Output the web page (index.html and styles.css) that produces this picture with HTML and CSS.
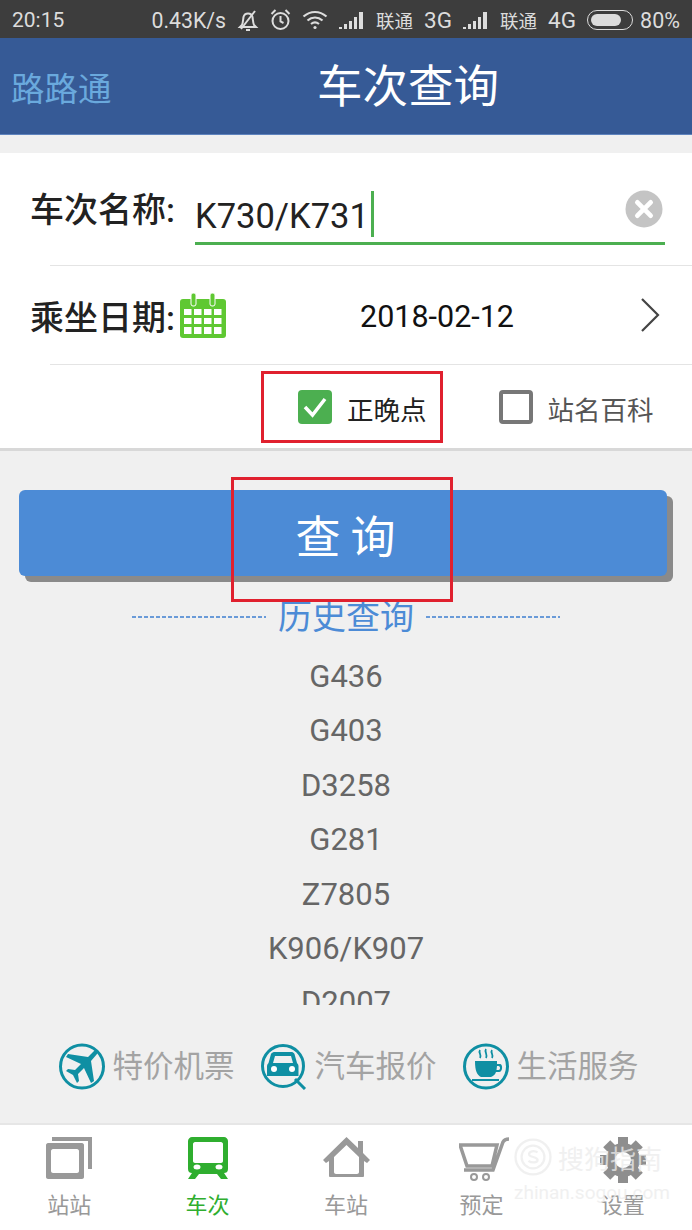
FILE: index.html
```html
<!DOCTYPE html>
<html lang="zh-CN">
<head>
  <meta charset="UTF-8">
  <title>车次查询</title>
  <link rel="stylesheet" href="styles.css">
</head>
<body>
  <div class="phone">
    <div class="status">
      <span class="time">20:15</span>
      <div class="status-right">
        <span class="speed">0.43K/s</span>
        <svg width="22" height="24" viewBox="0 0 22 24" fill="none" stroke="#ddd" stroke-width="2">
          <path d="M5 17c1-2 1-5 1.500-8 .5-2 2.500-3.500 4.500-3.500s4 1.500 4.500 3.500c.5 3 .5 6 1.500 8l2 2H3z"/>
          <path d="M9 22h4M18 3 4 21"/>
        </svg>
        <svg width="21" height="24" viewBox="0 0 21 24" fill="none" stroke="#ddd" stroke-width="2">
          <circle cx="10.500" cy="13" r="8"/>
          <path d="M10.500 8v5.500l3 1.500M1.500 6l4-4M19.500 6l-4-4"/>
        </svg>
        <svg width="26" height="20" viewBox="0 0 26 20" fill="none" stroke="#ddd" stroke-width="2.200">
          <path d="M1.500 6.500c7-6 16-6 23 0M5.500 10.500c4.500-4 10.500-4 15 0M9 14c2.500-2 5.500-2 8 0"/>
          <circle cx="13" cy="17.500" r="1.600" fill="#ddd" stroke="none"/>
        </svg>
        <svg class="signal" width="26" height="18" viewBox="0 0 26 18" fill="#ddd"><path d="M0 16h3v2H0zM5 13h3v5H5zM10 10h3v8h-3zM15 6h3v12h-3zM20 1h4v17h-4z"/></svg>
        <span class="carrier">联通</span>
        <span class="net">3G</span>
        <svg class="signal" width="26" height="18" viewBox="0 0 26 18" fill="#ddd"><path d="M0 16h3v2H0zM5 13h3v5H5zM10 10h3v8h-3zM15 6h3v12h-3zM20 1h4v17h-4z"/></svg>
        <span class="carrier">联通</span>
        <span class="net">4G</span>
        <div class="battery"><div class="battery-level"></div></div>
        <span class="percent">80%</span>
      </div>
    </div>

    <header class="topbar">
      <a class="back">路路通</a>
      <h1 class="title">车次查询</h1>
    </header>

    <section class="form">
      <div class="row row-train">
        <label class="label">车次名称:</label>
        <div class="input">
          <span class="input-text">K730/K731</span><span class="caret"></span>
          <svg class="clear" width="38" height="38" viewBox="0 0 40 40">
            <circle cx="20" cy="20" r="19.500" fill="#c4c4c4"/>
            <path d="M13 13l14 14M27 13 13 27" stroke="#fff" stroke-width="5" stroke-linecap="round"/>
          </svg>
        </div>
      </div>
      <div class="row row-date">
        <label class="label">乘坐日期:</label>
        <svg class="calendar" width="46" height="45" viewBox="0 0 46 45">
          <rect x="0" y="6" width="46" height="39" rx="3" fill="#5fc832"/>
          <rect x="11" y="0" width="5" height="13" rx="2" fill="#5fc832" stroke="#fff"/>
          <rect x="30" y="0" width="5" height="13" rx="2" fill="#5fc832" stroke="#fff"/>
          <g fill="#fff">
            <rect x="4" y="16" width="7.500" height="6"/><rect x="14" y="16" width="7.500" height="6"/><rect x="24" y="16" width="7.500" height="6"/><rect x="34" y="16" width="7.500" height="6"/>
            <rect x="4" y="25" width="7.500" height="6"/><rect x="14" y="25" width="7.500" height="6"/><rect x="24" y="25" width="7.500" height="6"/><rect x="34" y="25" width="7.500" height="6"/>
            <rect x="4" y="34" width="7.500" height="7"/><rect x="14" y="34" width="7.500" height="7"/><rect x="24" y="34" width="7.500" height="7"/><rect x="34" y="34" width="7.500" height="7"/>
          </g>
        </svg>
        <span class="date">2018-02-12</span>
        <svg class="chevron" width="20" height="34" viewBox="0 0 20 34" fill="none" stroke="#444" stroke-width="2.200"><path d="M2 1l16 16L2 33"/></svg>
      </div>
      <div class="options">
        <div class="option option-late">
          <span class="check check-on">
            <svg width="34" height="34" viewBox="0 0 34 34" fill="none" stroke="#fff" stroke-width="3.500"><path d="M7 17l7.500 8L27 9"/></svg>
          </span>
          <span class="option-text">正晚点</span>
        </div>
        <div class="option option-wiki">
          <span class="check"></span>
          <span class="option-text muted">站名百科</span>
        </div>
      </div>
    </section>

    <main class="content">
      <button class="query">查 询</button>
      <div class="history-head">
        <span class="dash"></span>
        <span class="history-title">历史查询</span>
        <span class="dash"></span>
      </div>
      <ul class="history">
        <li>G436</li>
        <li>G403</li>
        <li>D3258</li>
        <li>G281</li>
        <li>Z7805</li>
        <li>K906/K907</li>
        <li>D2007</li>
      </ul>
      <div class="links">
        <a class="link">
          <svg width="46" height="47" viewBox="0 0 46 47">
            <circle cx="23" cy="23.500" r="21.500" fill="none" stroke="#0f8fa3" stroke-width="3"/>
            <path fill="#0f8fa3" d="M35 8c2-1 4 1 3 3l-6 7 3 20-3 2-7-15-6 6 1 7-2 2-4-8-7-4 2-2 7 1 6-6-15-7 2-3 20 3z"/>
          </svg>
          <span>特价机票</span>
        </a>
        <a class="link">
          <svg width="46" height="47" viewBox="0 0 46 47">
            <circle cx="22" cy="23" r="20.500" fill="none" stroke="#0f8fa3" stroke-width="3"/>
            <path fill="#0f8fa3" d="M13 9h18c1 0 2 1 2.500 2l2.500 9c1 1 1.500 2 1.500 3v10H6v-10c0-1 .5-2 1.500-3L10 11c.5-1 2-2 3-2zm1 4-2 7h20l-2-7z"/>
            <circle cx="13" cy="26" r="3" fill="#fff"/><circle cx="31" cy="26" r="3" fill="#fff"/>
            <path d="M34 36l10 10" stroke="#0f8fa3" stroke-width="3"/>
          </svg>
          <span>汽车报价</span>
        </a>
        <a class="link">
          <svg width="46" height="47" viewBox="0 0 46 47">
            <circle cx="23" cy="23.500" r="21.500" fill="none" stroke="#0f8fa3" stroke-width="3"/>
            <path fill="none" stroke="#0f8fa3" stroke-width="1.800" d="M17 7c-2 3 2 4 0 8M23 6c-2 3 2 5 0 9M29 7c-2 3 2 4 0 8"/>
            <path fill="#0f8fa3" d="M12 18h22v3h3c3 0 3 8-1 8h-3c-1 3-3 4-5 5H18c-4-2-6-6-6-16zm22 5-.5 4h2c2 0 2-4 0-4zM9 36h27v2H9z"/>
          </svg>
          <span>生活服务</span>
        </a>
      </div>
    </main>

    <nav class="tabs">
      <a class="tab">
        <svg width="46" height="42" viewBox="0 0 46 42">
          <path fill="none" stroke="#999" stroke-width="4" d="M8 4V2h36v30"/>
          <path fill="#999" d="M2 6h34c1 0 2 1 2 2v32c0 1-1 2-2 2H2c-1 0-2-1-2-2V8c0-1 1-2 2-2zm5 6c-1 0-2 1-2 2v20c0 1 1 2 2 2h24c1 0 2-1 2-2V14c0-1-1-2-2-2z"/>
        </svg>
        <span>站站</span>
      </a>
      <a class="tab tab-active">
        <svg width="40" height="42" viewBox="0 0 40 42">
          <path fill="#2fae2f" d="M4 0h32c2 0 4 2 4 4v28c0 3-2 4-4 4l4 6h-7l-4-5H11l-4 5H0l4-6c-2 0-4-1-4-4V4c0-2 2-4 4-4zm3 5c-1 0-2 1-2 2v17c0 1 1 2 2 2h26c1 0 2-1 2-2V7c0-1-1-2-2-2z"/>
          <ellipse cx="9" cy="30" rx="3.500" ry="2.500" fill="#fff"/>
          <ellipse cx="31" cy="30" rx="3.500" ry="2.500" fill="#fff"/>
        </svg>
        <span>车次</span>
      </a>
      <a class="tab">
        <svg width="47" height="42" viewBox="0 0 47 42">
          <path fill="#999" d="M23.500 0 35 11V4h5v12l7 7-3 3-3-2v15c0 1-1 1-2 1H8c-1 0-2 0-2-1V24l-3 2-3-3zm0 8L11 20v15c0 1 1 2 2 2h21c1 0 2-1 2-2V20z"/>
        </svg>
        <span>车站</span>
      </a>
      <a class="tab tab-order">
        <svg width="54" height="44" viewBox="0 0 54 44" fill="none" stroke="#999">
          <path stroke-width="3.500" d="M1 8h37l-5 21H8zM5 33h29l10-28c1-2 3-3 6-3"/>
          <circle cx="15" cy="40" r="3" stroke-width="2"/>
          <circle cx="27" cy="40" r="3" stroke-width="2"/>
        </svg>
        <span>预定</span>
      </a>
      <a class="tab">
        <svg width="46" height="46" viewBox="0 0 46 46">
          <g fill="#8e8e8e">
            <circle cx="23" cy="23" r="17"/>
            <rect x="18" y="0" width="10" height="46"/>
            <rect x="18" y="0" width="10" height="46" transform="rotate(45 23 23)"/>
            <rect x="18" y="0" width="10" height="46" transform="rotate(90 23 23)"/>
            <rect x="18" y="0" width="10" height="46" transform="rotate(135 23 23)"/>
          </g>
          <circle cx="23" cy="23" r="8" fill="#fff"/>
        </svg>
        <span>设置</span>
      </a>
    </nav>

    <!-- annotation boxes and watermark lie over the screenshot -->
    <div class="mark mark-late"></div>
    <div class="mark mark-query"></div>
    <div class="watermark">
      <div class="wm-top">
        <svg width="38" height="40" viewBox="0 0 50 50" fill="none" stroke="#ececec" stroke-width="3">
          <circle cx="25" cy="25" r="23"/><circle cx="25" cy="25" r="15"/>
          <path d="M31 19c-4-3-12-2-11 3 1 4 11 2 11 7 0 4-8 4-12 1"/>
        </svg>
        <span>搜狗指南</span>
      </div>
      <div class="wm-url">zhinan.sogou.com</div>
    </div>
  </div>
</body>
</html>
```

FILE: styles.css
```css
* {
  box-sizing: border-box;
}

body {
  margin: 0;
  background-color: #f0f0f0;
  font-family: Roboto, "Noto Sans CJK SC", sans-serif;
}

.phone {
  position: relative;
  width: 692px;
  height: 1230px;
  overflow: hidden;
  display: flex;
  flex-direction: column;
  background-color: #f0f0f0;
}

/* status bar */
.status {
  height: 38px;
  flex: none;
  display: flex;
  align-items: center;
  justify-content: space-between;
  padding: 2px 12px 0;
  background-color: #3d3d3d;
  color: #dcdcdc;
  font-size: 21px;
}

.status-right {
  display: flex;
  align-items: center;
}

.status-right svg {
  flex: none;
  margin-left: 11px;
}

.speed {
  font-size: 21.300px;
}

.carrier {
  font-size: 18.500px;
  margin-left: 11px;
}

.net {
  font-size: 22.500px;
  margin-left: 11px;
}

.battery {
  width: 46px;
  height: 20px;
  margin-left: 11px;
  padding: 3px;
  border: 1.500px solid #dcdcdc;
  border-radius: 10px;
}

.battery-level {
  width: 80%;
  height: 100%;
  border-radius: 7px;
  background-color: #dcdcdc;
}

.percent {
  font-size: 21.500px;
  margin-left: 7px;
}

/* top bar */
.topbar {
  height: 97px;
  flex: none;
  display: flex;
  align-items: center;
  padding-left: 11px;
  background-color: #365a96;
  border-bottom: 1px solid #5e83bd;
}

.back {
  width: 306px;
  color: #6aa9dd;
  font-size: 33.500px;
}

.title {
  margin: 0;
  padding-top: 4px;
  color: #fff;
  font-size: 45.500px;
  font-weight: 400;
  line-height: 1;
}

/* form */
.form {
  height: 298px;
  flex: none;
  margin-top: 18px;
  background-color: #fff;
  border-bottom: 3px solid #d8d8d8;
}

.row {
  display: flex;
  align-items: center;
  margin-left: 50px;
  border-bottom: 1px solid #e4e4e4;
}

.row-train {
  height: 113px;
}

.row-date {
  height: 99px;
}

.label {
  width: 148px;
  flex: none;
  margin-left: -20px;
  color: #222;
  font-size: 34px;
  font-weight: 500;
  white-space: nowrap;
}

.row-train .label {
  margin-bottom: 4px;
}

.input {
  width: 470px;
  height: 50px;
  margin-left: 17px;
  margin-top: 22px;
  display: flex;
  align-items: center;
  border-bottom: 3px solid #4caf50;
}

.input-text {
  color: #222;
  font-size: 34.500px;
  padding-bottom: 6px;
}

.caret {
  width: 3px;
  height: 46px;
  margin-left: 2px;
  margin-bottom: 10px;
  background-color: #4caf50;
}

.clear {
  margin-left: auto;
  margin-bottom: 20px;
  margin-right: 2px;
}

.calendar {
  flex: none;
  margin-left: 2px;
}

.date {
  margin-left: 134px;
  padding-top: 2px;
  color: #111;
  font-size: 30.500px;
}

.chevron {
  margin-left: auto;
  margin-right: 32px;
}

.options {
  height: 83px;
  display: flex;
  align-items: center;
  padding-left: 298px;
  color: #222;
  font-size: 26.500px;
}

.option {
  display: flex;
  align-items: center;
  gap: 15px;
}

.option-text {
  padding-top: 3px;
}

.option-wiki {
  margin-left: 72px;
}

.muted {
  color: #555;
}

.check {
  width: 34px;
  height: 34px;
  flex: none;
  display: block;
  border: 4px solid #777;
  border-radius: 4px;
}

.check-on {
  border: 0;
  background-color: #4caf50;
}

/* query and history */
.content {
  flex: 1;
  display: flex;
  flex-direction: column;
  align-items: center;
  padding-top: 39px;
}

.query {
  width: 648px;
  height: 86px;
  flex: none;
  margin-left: -7px;
  padding: 3px 0 0 6px;
  border: 0;
  border-radius: 6px;
  background-color: #4c8bd6;
  box-shadow: 6px 6px 0 #8a8a8a;
  color: #fff;
  font-family: "Noto Sans CJK SC", sans-serif;
  font-size: 45px;
  line-height: 1;
}

.history-head {
  height: 42px;
  flex: none;
  margin-top: 20px;
  display: flex;
  align-items: center;
  gap: 12px;
}

.dash {
  width: 134px;
  height: 2px;
  background: repeating-linear-gradient(90deg, #6a9bd8 0 4px, transparent 4px 6px);
}

.history-title {
  color: #4c8bd6;
  font-size: 34px;
  line-height: 42px;
}

.history {
  width: 100%;
  height: 367px;
  flex: none;
  margin: 0;
  padding: 12px 0 0;
  overflow: hidden;
  list-style: none;
  text-align: center;
  color: #666;
  font-size: 31px;
}

.history li {
  height: 54.400px;
  line-height: 54.400px;
}

.links {
  margin-top: 38px;
  display: flex;
  gap: 26px;
  margin-left: 5px;
}

.link {
  display: flex;
  align-items: center;
  gap: 8px;
  color: #a3a3a3;
  font-size: 30.500px;
  line-height: 47px;
}

/* bottom tabs */
.tabs {
  height: 107px;
  flex: none;
  display: flex;
  background-color: #fff;
  border-top: 2px solid #e6e6e6;
}

.tab {
  flex: 1;
  height: 100%;
  display: flex;
  flex-direction: column;
  align-items: center;
  justify-content: space-between;
  padding: 12px 0 9px;
  color: #999;
  font-size: 22px;
  line-height: 30px;
}

.tab-active {
  color: #2fae2f;
}

.tab-order span {
  margin-right: 6px;
}

.tab-order svg {
  margin-left: 3px;
}

/* overlays */
.mark {
  position: absolute;
  border: 3px solid #e0202e;
}

.mark-late {
  left: 261px;
  top: 371px;
  width: 182px;
  height: 72px;
}

.mark-query {
  left: 231px;
  top: 477px;
  width: 222px;
  height: 125px;
}

.watermark {
  position: absolute;
  left: 514px;
  top: 1137px;
  width: 156px;
  color: #ececec;
  opacity: .75;
}

.wm-top {
  display: flex;
  align-items: center;
  gap: 6px;
  font-size: 26px;
  white-space: nowrap;
}

.wm-url {
  font-size: 19px;
  line-height: 24px;
  margin-top: 4px;
  white-space: nowrap;
}
```
